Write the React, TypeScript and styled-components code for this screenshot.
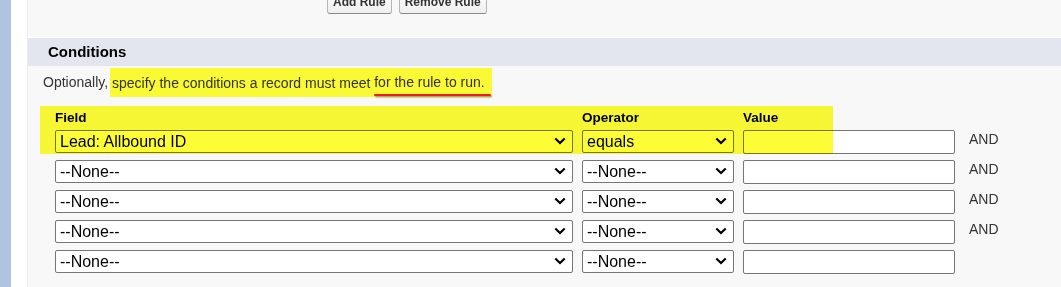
import React from "react";
import styled, { createGlobalStyle } from "styled-components";

const GlobalStyle = createGlobalStyle`
  html, body {
    margin: 0;
    padding: 0;
    background: #ffffff;
    font-family: "Liberation Sans", Arial, sans-serif;
  }
`;

const Page = styled.div`
  display: flex;
  height: 287px;
  overflow: hidden;
`;

const SideStrip = styled.div`
  width: 11px;
  flex-shrink: 0;
  background: #b0c4df;
`;

const Gutter = styled.div`
  width: 16px;
  flex-shrink: 0;
  background: #ffffff;
`;

const Panel = styled.div`
  flex: 1;
  background: #f8f8f8;
  border-left: 1px solid #ececec;
  display: flex;
  flex-direction: column;
`;

const TopBar = styled.div`
  height: 37px;
  padding-left: 299px;
  display: flex;
  align-items: flex-start;
`;

const ButtonRow = styled.div`
  display: flex;
  gap: 7px;
  margin-top: -10.5px;
`;

const Button = styled.button`
  font-family: "Liberation Sans", Arial, sans-serif;
  font-size: 12px;
  font-weight: bold;
  color: #333333;
  padding: 4px 5px;
  border: 1px solid #b5b5b5;
  border-bottom-color: #8a8a8a;
  border-radius: 3px;
  background: linear-gradient(#ffffff, #efefef);
  line-height: 14px;
`;

const SectionHeader = styled.h3`
  margin: 0;
  height: 28px;
  line-height: 28px;
  border-top: 1px solid #ffffff;
  background: #e3e6ef;
  padding-left: 20px;
  font-size: 15px;
  font-weight: bold;
  color: #000000;
`;

const Intro = styled.p`
  margin: 0;
  padding: 8px 0 0 15px;
  font-size: 14px;
  line-height: 16px;
  color: #333333;
`;

const Marker = styled.span`
  background: #f9f934;
  margin-left: -2px;
  padding: 6.5px 7px 7px 2px;
`;

const RedUnderline = styled.span`
  position: relative;
  &::after {
    content: "";
    position: absolute;
    left: 0;
    right: -6px;
    top: calc(100% + 3.5px);
    height: 2px;
    border-radius: 1px;
    background: #ec1c24;
    box-shadow: 1px 1.5px 1.5px rgba(0, 0, 0, 0.35);
  }
`;

const CriteriaTable = styled.div`
  position: relative;
  margin: 20px 0 0 27px;
  display: flex;
  flex-direction: column;
  gap: 6px;
`;

const Columns = styled.div`
  display: grid;
  grid-template-columns: 518px 152px 212px auto;
  column-gap: 9px;
  align-items: start;
`;

const HeaderRow = styled(Columns)`
  margin-bottom: -2px;
  font-size: 13.5px;
  line-height: 16px;
  font-weight: bold;
  color: #000000;
`;

const SelectBox = styled.div`
  box-sizing: border-box;
  height: 23px;
  display: flex;
  align-items: center;
  justify-content: space-between;
  padding: 0 6px 0 4px;
  border: 1px solid #767676;
  border-radius: 2px;
  background: #ffffff;
  font-size: 16px;
  color: #000000;
  white-space: nowrap;
`;

const ValueInput = styled.input`
  box-sizing: border-box;
  width: 100%;
  height: 24px;
  margin: 0;
  border: 1px solid #767676;
  border-radius: 2px;
  background: #ffffff;
  font-family: "Liberation Sans", Arial, sans-serif;
  font-size: 14px;
`;

const Joiner = styled.span`
  margin-left: 5px;
  padding-top: 1px;
  font-size: 14px;
  line-height: 16px;
  color: #333333;
`;

const Highlight = styled.div`
  position: absolute;
  left: -15px;
  top: -4px;
  width: 793px;
  height: 48px;
  background: #fdfd35;
  mix-blend-mode: multiply;
  pointer-events: none;
`;

const Chevron = () => (
  <svg width="12" height="8" viewBox="0 0 12 8" style={{ marginTop: -2 }}>
    <path
      d="M1.3 1.5 L6 6 L10.7 1.5"
      fill="none"
      stroke="#000"
      strokeWidth="2.2"
    />
  </svg>
);

function Select({ value }: { value: string }) {
  return (
    <SelectBox>
      <span>{value}</span>
      <Chevron />
    </SelectBox>
  );
}

const rows = [
  { field: "Lead: Allbound ID", operator: "equals", and: true },
  { field: "--None--", operator: "--None--", and: true },
  { field: "--None--", operator: "--None--", and: true },
  { field: "--None--", operator: "--None--", and: true },
  { field: "--None--", operator: "--None--", and: false },
];

export default function App() {
  return (
    <>
      <GlobalStyle />
      <Page>
        <SideStrip />
        <Gutter />
        <Panel>
          <TopBar>
            <ButtonRow>
              <Button>Add Rule</Button>
              <Button>Remove Rule</Button>
            </ButtonRow>
          </TopBar>

          <SectionHeader>Conditions</SectionHeader>

          <Intro>
            Optionally,{" "}
            <Marker>
              specify the conditions a record must meet{" "}
              <RedUnderline>for the rule to run.</RedUnderline>
            </Marker>
          </Intro>

          <CriteriaTable>
            <HeaderRow>
              <span>Field</span>
              <span>Operator</span>
              <span>Value</span>
              <span />
            </HeaderRow>
            {rows.map((row, i) => (
              <Columns key={i}>
                <Select value={row.field} />
                <Select value={row.operator} />
                <ValueInput type="text" />
                {row.and ? <Joiner>AND</Joiner> : <span />}
              </Columns>
            ))}
            <Highlight />
          </CriteriaTable>
        </Panel>
      </Page>
    </>
  );
}
